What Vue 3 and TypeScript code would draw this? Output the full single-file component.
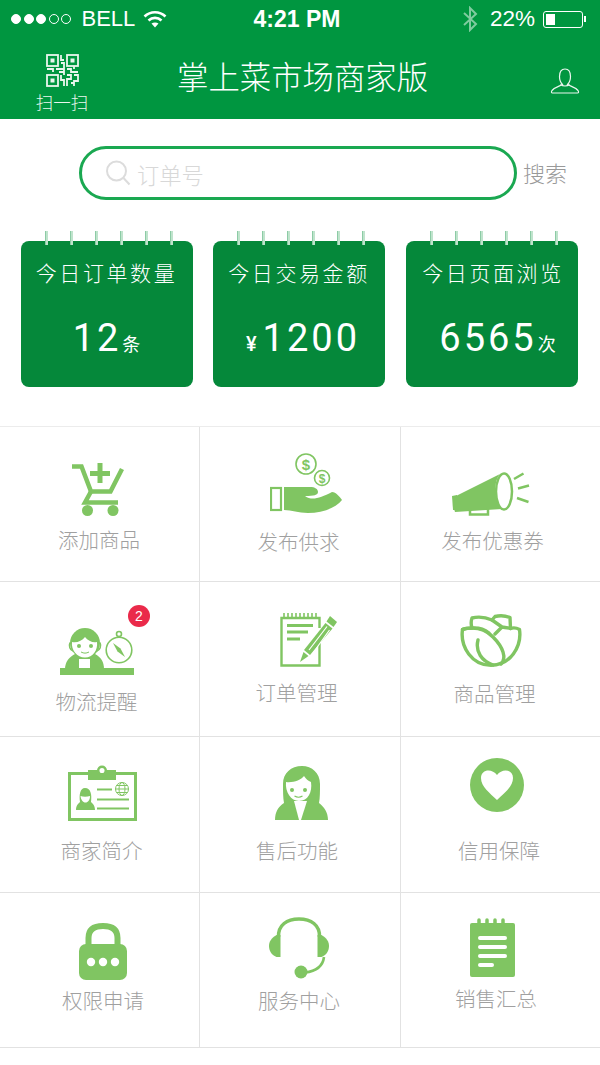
<script setup lang="ts">
interface Item { key: string; label: string; badge?: string }
const stats = [
  { title: '今日订单数量', prefix: '', value: '12', unit: '条', cls: 'n1' },
  { title: '今日交易金额', prefix: '¥', value: '1200', unit: '', cls: 'n2' },
  { title: '今日页面浏览', prefix: '', value: '6565', unit: '次', cls: 'n3' },
]
const pins = [0, 1, 2, 3, 4, 5]
const items: Item[] = [
  { key: 'cart', label: '添加商品' },
  { key: 'hand', label: '发布供求' },
  { key: 'horn', label: '发布优惠券' },
  { key: 'person', label: '物流提醒', badge: '2' },
  { key: 'order', label: '订单管理' },
  { key: 'leaf', label: '商品管理' },
  { key: 'idcard', label: '商家简介' },
  { key: 'girl', label: '售后功能' },
  { key: 'heart', label: '信用保障' },
  { key: 'lock', label: '权限申请' },
  { key: 'phones', label: '服务中心' },
  { key: 'note', label: '销售汇总' },
]
</script>

<template>
  <div class="page">
    <header class="top">
      <div class="status">
        <div class="st-left">
          <span class="dot on"></span><span class="dot on"></span><span class="dot on"></span><span class="dot"></span><span class="dot"></span>
          <span class="carrier">BELL</span>
          <svg class="wifi" width="24" height="18" viewBox="0 0 24 18" fill="none" stroke="#fff" stroke-width="2.6">
            <path d="M1.5 6.5C7.5 .8 16.5 .8 22.5 6.5" />
            <path d="M5.5 10.5C9.3 7 14.7 7 18.5 10.5" />
            <path d="M12 17.5L8.5 13.6C10.5 12 13.5 12 15.5 13.6Z" fill="#fff" stroke="none" />
          </svg>
        </div>
        <div class="time">4:21 PM</div>
        <div class="st-right">
          <svg class="bt" width="16" height="26" viewBox="0 0 16 26" fill="none" stroke="#7fcb9f" stroke-width="2">
            <path d="M2 7L14 18L8 24V2L14 8L2 19" />
          </svg>
          <span class="pct">22%</span>
          <span class="battery"><i></i></span><span class="nub"></span>
        </div>
      </div>
      <div class="nav">
        <div class="scan">
          <svg width="33" height="33" viewBox="0 0 33 33" fill="none" stroke="#eaf6ee" stroke-width="1.8">
            <rect x="1" y="1" width="11" height="11" /><rect x="21" y="1" width="11" height="11" /><rect x="1" y="21" width="11" height="11" />
            <rect x="4.5" y="4.5" width="4" height="4" fill="#eaf6ee" stroke="none" /><rect x="24.5" y="4.5" width="4" height="4" fill="#eaf6ee" stroke="none" /><rect x="4.5" y="24.5" width="4" height="4" fill="#eaf6ee" stroke="none" />
            <path d="M15 1v5h3M15 9h3v5M1 15h6v3M10 15h8v3h-5M21 15h4v3h7M15 21v5h3v6M21 21h4v4h-4v7M28 21h4v6h-4v5M25 29h3M18 18v3M28 12v3" />
          </svg>
          <span class="scan-t">扫一扫</span>
        </div>
        <h1 class="title">掌上菜市场商家版</h1>
        <svg class="user" width="30" height="26" viewBox="0 0 30 26" fill="none" stroke="#eaf6ee" stroke-width="1.2">
          <path d="M9.5 8.5C9.5 3.5 11.5 1 15 1S20.5 3.5 20.5 8.5C20.5 12 19 15 17.5 16.5C20 18 25 19 28 22.5C29 24 28.5 25 27.5 25H2.5C1.5 25 1 24 2 22.5C5 19 10 18 12.5 16.5C11 15 9.5 12 9.5 8.5Z" />
          <path d="M10.5 16.5C13 18.5 17 18.5 19.5 16.5" />
        </svg>
      </div>
    </header>

    <div class="search-row">
      <div class="search">
        <svg width="26" height="26" viewBox="0 0 26 26" fill="none" stroke="#dcdcdc" stroke-width="2">
          <circle cx="11.5" cy="11" r="9.5" /><path d="M18.5 18L24.5 24.5" />
        </svg>
        <span class="ph">订单号</span>
      </div>
      <span class="go">搜索</span>
    </div>

    <div class="stats">
      <div v-for="s in stats" :key="s.title" class="stat" :class="s.cls">
        <div class="pins"><i v-for="p in pins" :key="p"></i></div>
        <div class="stat-t">{{ s.title }}</div>
        <div class="stat-n">
          <span v-if="s.prefix" class="yen">{{ s.prefix }}</span>{{ s.value }}<span v-if="s.unit" class="unit">{{ s.unit }}</span>
        </div>
      </div>
    </div>

    <div class="grid">
      <div v-for="it in items" :key="it.key" class="cell" :class="'c-' + it.key">
        <span v-if="it.badge" class="badge">{{ it.badge }}</span>

        <svg v-if="it.key === 'cart'" class="icon" width="52" height="53" viewBox="0 0 52 53">
          <g fill="none" stroke="#80c562" stroke-width="4.5">
            <path d="M0 3.5H9.5L19 28.5H38.5L50 6" />
            <path d="M19 28.5L13 39.5H46" />
            <path d="M28 0V20M18 10.5H38" stroke-width="5" />
          </g>
          <circle cx="15.5" cy="47.5" r="5.5" fill="#80c562" /><circle cx="41" cy="47.5" r="5.5" fill="#80c562" />
        </svg>

        <svg v-else-if="it.key === 'hand'" class="icon" width="72" height="62" viewBox="0 0 72 62">
          <g fill="none" stroke="#80c562" stroke-width="1.6">
            <circle cx="36" cy="11" r="10" /><circle cx="52" cy="25" r="7.5" />
            <rect x="1" y="35" width="10" height="22" stroke-width="2.2" />
          </g>
          <text x="36" y="16.5" text-anchor="middle" class="dollar">$</text>
          <text x="52" y="29.5" text-anchor="middle" class="dollar small">$</text>
          <path d="M14 34H40C45 34 48 36 48 39C48 42 44 43 35 43C42 48 50 45 62 39C66 39 70 44 72 47C66 55 52 60 38 60C28 60 22 57 14 57Z" fill="#80c562" />
        </svg>

        <svg v-else-if="it.key === 'horn'" class="icon" width="78" height="44" viewBox="0 0 78 44">
          <path d="M2 25L48 2C42 8 41 28 50 37L3 40C1 34 1 30 2 25Z" fill="#80c562" />
          <path d="M0 24L5 23V38L1 38Z" fill="#80c562" />
          <ellipse cx="52" cy="19.5" rx="8" ry="18" fill="#fff" stroke="#80c562" stroke-width="2.5" />
          <path d="M18 36V42.5H36V36" fill="none" stroke="#80c562" stroke-width="2.5" />
          <path d="M62 7L71.5 1.5M66 16.5L77 13.5M65 26L76.5 30" fill="none" stroke="#80c562" stroke-width="2.5" />
        </svg>

        <svg v-else-if="it.key === 'person'" class="icon" width="74" height="47" viewBox="0 0 74 47">
          <path d="M5 41C5 34 9 29 15 26H35C41 29 44 34 44 41Z" fill="#80c562" />
          <rect x="19" y="31" width="11" height="10" fill="#fff" />
          <rect x="0" y="40" width="74" height="7" fill="#80c562" />
          <circle cx="25" cy="15" r="15" fill="#80c562" />
          <path d="M12 14C17 15 22 13 25 9C28 13 33 15 37 14C38 22 33 29.5 25 29.5C17 29.5 11 22 12 14Z" fill="#fff" />
          <path d="M10 14.5C8.5 18 10 22 13 23M40 14.5C41.5 18 40 22 37 23" fill="none" stroke="#80c562" stroke-width="1.5" />
          <circle cx="19" cy="18" r="2" fill="#80c562" /><circle cx="31" cy="18" r="2" fill="#80c562" />
          <path d="M21 24C24 25.5 26 25.5 29 24" fill="none" stroke="#80c562" stroke-width="1" />
          <g fill="none" stroke="#80c562" stroke-width="1.6">
            <circle cx="59" cy="22" r="12.8" /><circle cx="59" cy="6" r="2.5" />
          </g>
          <path d="M53 15L60.5 20.5L65 29L57.5 23.5Z" fill="#80c562" />
        </svg>

        <svg v-else-if="it.key === 'order'" class="icon" width="58" height="54" viewBox="0 0 58 54">
          <path d="M39.5 15V5H1.5V52.5H39.5V27" fill="none" stroke="#80c562" stroke-width="2.4" />
          <path d="M4 0V5M8 0V5M12 0V5M16 0V5M20 0V5M24 0V5M28 0V5M32 0V5M36 0V5" stroke="#80c562" stroke-width="1.6" />
          <path d="M7 11H33V14H7ZM7 17.5H28V20.5H7ZM7 24.5H20V27.5H7Z" fill="#80c562" />
          <path d="M50 3L57 9L53.5 14L46.5 8.5Z" fill="#80c562" />
          <path d="M45.5 10L52.5 15.5L30 42L24 37Z" fill="#80c562" />
          <path d="M29 37L47 13.5M33 40L49.5 17" stroke="#fff" stroke-width="1.2" />
          <path d="M23.5 39L28.5 43L20 49Z" fill="#80c562" />
        </svg>

        <svg v-else-if="it.key === 'leaf'" class="icon" width="62" height="53" viewBox="0 0 62 53" fill="none" stroke="#80c562" stroke-width="3.4" stroke-linejoin="round" stroke-linecap="round">
          <path d="M2.5 15.5C0 33 12 51.3 31 51.3C50 51.3 62 33 59.5 15.5C56 13.5 53 13.5 50.5 14.5L50 3.5C45 1.5 39 1.5 35 2.5L32 6C25 3 18 2.5 12 4C11 7 11 11 12 14C8 14 5 14 2.5 15.5Z" />
          <path d="M2.5 15.5C12 13 24 14 33 23C43 33 47 44 41 50" />
          <path d="M18 26C15 38 22 47 33 51" />
          <path d="M32 6L42 13L35 20M42 13C46 13.5 49 14 50.5 14.5" />
          <path d="M12 14C18 13.5 24 15 29 19" />
        </svg>

        <svg v-else-if="it.key === 'idcard'" class="icon" width="69" height="56" viewBox="0 0 69 56">
          <rect x="1.5" y="8.5" width="66" height="46" fill="none" stroke="#80c562" stroke-width="3" />
          <path d="M20 5H48V15H20Z" fill="#80c562" />
          <circle cx="34" cy="5.5" r="3.8" fill="#fff" stroke="#80c562" stroke-width="2.5" />
          <path d="M8 45C8 40 11 38 12 37C11 30 12 23 17 23C23 23 24 30 23 37C24 38 27 40 27 45Z" fill="#80c562" />
          <path d="M12.5 31C15 32 19 32 22 31C22 35 20 37.5 17.5 37.5C15 37.5 13 35 12.5 31Z" fill="#fff" />
          <path d="M29 24.5H44M29 34.5H61M29 43.5H61" stroke="#80c562" stroke-width="2.2" />
          <g fill="none" stroke="#80c562" stroke-width="1"><circle cx="54" cy="24" r="6.5" /><ellipse cx="54" cy="24" rx="3" ry="6.5" /><path d="M47.5 24H60.5M48.5 20.5H59.5M48.5 27.5H59.5" /></g>
        </svg>

        <svg v-else-if="it.key === 'girl'" class="icon" width="53" height="54" viewBox="0 0 53 54">
          <path d="M0 54C0 46 3 41 9 37C8 32 8 25 8 18C8 7 16 0 27 0C37 0 45 7 45 18C45 25 45 32 44 37C49 41 53 46 53 54Z" fill="#80c562" />
          <path d="M11 16C18 17 26 14 29 10C31 13 33 15 36 16C37.5 26 33 35 24 35C16 35 10 26 11 16Z" fill="#fff" />
          <path d="M19 35H32L26 54H24Z" fill="#fff" />
          <circle cx="17" cy="24" r="2" fill="#80c562" /><circle cx="30" cy="24" r="2" fill="#80c562" />
          <path d="M19.5 30C22 31.5 25 31.5 27.5 30" fill="none" stroke="#80c562" stroke-width="1.1" />
        </svg>

        <svg v-else-if="it.key === 'heart'" class="icon" width="54" height="54" viewBox="0 0 54 54">
          <circle cx="27" cy="27" r="27" fill="#80c562" />
          <path d="M27 42C20 35 11 29 11 20C11 11 22 10 27 17C32 10 43 11 43 20C43 29 34 35 27 42Z" fill="#fff" />
        </svg>

        <svg v-else-if="it.key === 'lock'" class="icon" width="48" height="57" viewBox="0 0 48 57">
          <path d="M9.5 24V15C9.5 6.5 15 3 24 3C33 3 38.5 6.5 38.5 15V24" fill="none" stroke="#80c562" stroke-width="6" />
          <rect x="0" y="21" width="48" height="36" rx="7" fill="#80c562" />
          <circle cx="12" cy="39" r="4.2" fill="#fff" /><circle cx="24" cy="39" r="4.2" fill="#fff" /><circle cx="36" cy="39" r="4.2" fill="#fff" />
        </svg>

        <svg v-else-if="it.key === 'phones'" class="icon" width="60" height="62" viewBox="0 0 60 62">
          <path d="M9.5 20C9 8 18 2 30 2C42 2 51 8 50.5 20" fill="none" stroke="#80c562" stroke-width="3.5" />
          <path d="M11.5 18H7.5C2 21 0 25 0 29C0 33 2 38 7.5 40H11.5Z" fill="#80c562" />
          <path d="M48.5 18H52.5C58 21 60 25 60 29C60 33 58 38 52.5 40H48.5Z" fill="#80c562" />
          <path d="M55 40C54 48 49 54 36 55.5" fill="none" stroke="#80c562" stroke-width="2.6" />
          <circle cx="32" cy="55" r="6.5" fill="#80c562" />
        </svg>

        <svg v-else-if="it.key === 'note'" class="icon" width="45" height="59" viewBox="0 0 45 59">
          <rect x="0" y="5" width="45" height="54" rx="2" fill="#80c562" />
          <path d="M9 2V7M17 2V7M25 2V7M33 2V7" stroke="#80c562" stroke-width="3.5" stroke-linecap="round" />
          <path d="M10 20H35M10 29H35M10 38H35M10 47H22" stroke="#fff" stroke-width="4" stroke-linecap="round" />
        </svg>

        <span class="label">{{ it.label }}</span>
      </div>
    </div>
  </div>
</template>

<style>
html, body { margin: 0; background: #fff; }
</style>

<style scoped>
.page {
  width: 600px;
  height: 1065px;
  overflow: hidden;
  background: #fff;
  font-family: "Noto Sans CJK SC", "Liberation Sans", sans-serif;
}
.top { height: 119px; background: #009640; color: #fff; }
.status {
  height: 38px;
  display: flex;
  align-items: center;
  justify-content: space-between;
  padding: 0 14px 0 11px;
  font-family: "Liberation Sans", sans-serif;
  font-size: 22px;
}
.st-left, .st-right { display: flex; align-items: center; width: 190px; }
.st-right { justify-content: flex-end; }
.dot {
  width: 10px; height: 10px; margin-right: 2.5px;
  border: 1px solid #fff; border-radius: 50%; box-sizing: border-box;
}
.dot.on { background: #fff; }
.carrier { margin-left: 8px; }
.wifi { margin-left: 8px; }
.time { font-weight: 700; font-size: 23px; margin-left: -3px; }
.bt { margin-right: 12px; }
.pct { margin-right: 8px; font-size: 22.5px; }
.battery {
  width: 40px; height: 17px; box-sizing: border-box;
  border: 1.5px solid #fff; border-radius: 3px; padding: 2px;
  display: flex;
}
.battery i { width: 9px; background: #fff; display: block; }
.nub { width: 2px; height: 6px; background: #fff; margin-left: 1px; }
.nav {
  height: 81px;
  display: flex;
  align-items: flex-start;
  position: relative;
}
.scan {
  width: 124px;
  display: flex;
  flex-direction: column;
  align-items: center;
  padding-top: 16px;
  box-sizing: border-box;
}
.scan-t { font-size: 17.5px; line-height: 20px; margin-top: 5px; font-weight: 300; color: #eaf6ee; }
.title {
  margin: 18px 0 0 53px;
  font-size: 31.4px;
  line-height: 40px;
  font-weight: 300;
  white-space: nowrap;
}
.user { margin: 30px 0 0 122px; }
.search-row {
  display: flex;
  align-items: center;
  margin: 27px 0 0 79px;
}
.search {
  width: 438px;
  height: 54px;
  box-sizing: border-box;
  border: 3px solid #1aa851;
  border-radius: 27px;
  display: flex;
  align-items: center;
  padding-left: 23px;
}
.ph { font-size: 22.3px; color: #d8d8d8; margin: 2px 0 0 6px; font-weight: 300; line-height: 28px; }
.go { font-size: 22px; color: #999; margin-left: 6px; font-weight: 300; line-height: 28px; margin-top: -3px; }
.stats {
  display: grid;
  grid-template-columns: 172px 172px 172px;
  column-gap: 20.5px;
  margin: 41px 0 0 20.5px;
}
.stat {
  height: 146px;
  background: #05883a;
  border-radius: 8px;
  color: #fff;
  position: relative;
  display: flex;
  flex-direction: column;
  align-items: center;
}
.pins {
  position: absolute;
  top: -10px;
  left: 24px;
  display: flex;
  gap: 22px;
}
.pins i {
  display: block;
  width: 2px;
  height: 14px;
  background: #bfe3cc;
  border-left: 1px solid #8ccba5;
}
.stat-t {
  margin-top: 17px;
  font-size: 21px;
  letter-spacing: 2.6px;
  line-height: 28px;
  font-weight: 300;
  white-space: nowrap;
}
.n3 .stat-t { margin-left: 3px; }
.stat-n {
  margin-top: 29px;
  font-family: "Roboto", "Liberation Sans", sans-serif;
  font-weight: 400;
  font-size: 38px;
  letter-spacing: 3px;
  line-height: 46px;
  white-space: nowrap;
  display: flex;
  align-items: baseline;
}
.n2 .stat-n { margin-left: 8px; }
.n3 .stat-n { margin-left: 12px; }
.yen { font-size: 20px; margin-right: 3px; font-weight: 500; }
.unit {
  font-family: "Noto Sans CJK SC", sans-serif;
  font-size: 18px;
  letter-spacing: 0;
  margin-left: 1px;
  font-weight: 400;
}
.grid {
  margin-top: 39px;
  display: grid;
  grid-template-columns: 200px 201px 199px;
  grid-template-rows: 155px 155px 156px 155px;
  border-top: 1px solid #ececec;
  width: 600px;
}
.cell {
  position: relative;
  box-sizing: border-box;
  border-bottom: 1px solid #e2e2e2;
  border-right: 1px solid #e2e2e2;
  display: flex;
  flex-direction: column;
  align-items: center;
  padding-top: var(--pt);
}
.cell:nth-child(3n) { border-right: 0; }
.icon { display: block; flex: none; margin-left: var(--ix); }
.label {
  display: block;
  font-size: 20.5px;
  line-height: 24px;
  color: #a0a0a0;
  font-weight: 300;
  white-space: nowrap;
  margin-top: var(--gap);
  margin-left: var(--lx);
}
.dollar { font-family: "Liberation Sans", sans-serif; font-size: 15px; font-weight: 700; fill: #80c562; }
.dollar.small { font-size: 12px; }
.badge {
  position: absolute;
  left: 128px;
  top: 23px;
  width: 22px;
  height: 22px;
  border-radius: 50%;
  background: #ea2a4a;
  color: #fff;
  font-family: "Liberation Sans", sans-serif;
  font-size: 14px;
  line-height: 22px;
  text-align: center;
}
.c-cart { --pt: 36px; --ix: -3px; --gap: 11px; --lx: -1px; }
.c-hand { --pt: 26px; --ix: 11px; --gap: 14px; --lx: -3px; }
.c-horn { --pt: 45px; --ix: -19px; --gap: 12px; --lx: -16px; }
.c-person { --pt: 46px; --ix: -5px; --gap: 14px; --lx: -6px; }
.c-order { --pt: 31px; --ix: 17px; --gap: 13px; --lx: -7px; }
.c-leaf { --pt: 32px; --ix: -19px; --gap: 14px; --lx: -12px; }
.c-idcard { --pt: 28px; --ix: 6px; --gap: 17px; --lx: 4px; }
.c-girl { --pt: 29px; --ix: 3px; --gap: 18px; --lx: -6px; }
.c-heart { --pt: 21px; --ix: -7px; --gap: 26px; --lx: -3px; }
.c-lock { --pt: 30px; --ix: 7px; --gap: 8px; --lx: 7px; }
.c-phones { --pt: 24px; --ix: -2px; --gap: 9px; --lx: -2px; }
.c-note { --pt: 25px; --ix: -16px; --gap: 9px; --lx: -9px; }
</style>
